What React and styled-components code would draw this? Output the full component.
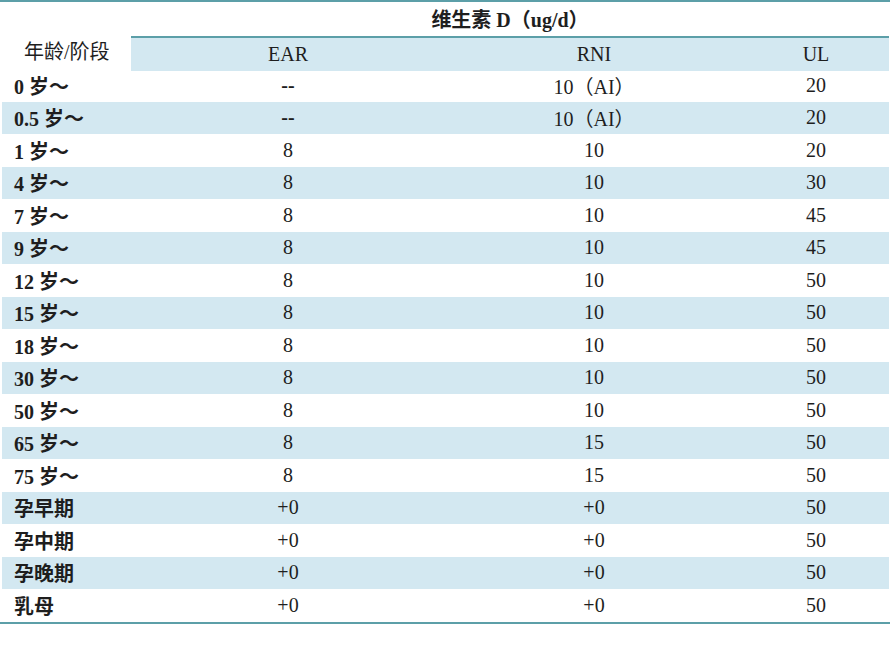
import React from 'react'
import styled, { createGlobalStyle } from 'styled-components'

const Global = createGlobalStyle`
    body {
        margin: 0;
        background: #fff;
    }
`

const Table = styled.div`
    width: 890px;
    border-top: 2px solid #5c9fa8;
    border-bottom: 2px solid #5c9fa8;
    font-family: "Liberation Serif", "Noto Sans CJK SC", serif;
    font-size: 20px;
    color: #1e1e1e;
`

const Grid = styled.div`
    display: grid;
    grid-template-columns: 129px 314px 298px 146px;
    margin: 0 1px 0 2px;
`

const TitleRow = styled(Grid)`
    height: 34px;
    align-items: center;
`

const Title = styled.div`
    grid-column: 2 / 5;
    text-align: center;
    font-weight: 700;
    padding-bottom: 2px;
`

const HeadRow = styled(Grid)`
    height: 33px;
`

const Corner = styled.div`
    display: flex;
    align-items: center;
    padding-left: 22px;
    padding-bottom: 6px;
`

const HeadCells = styled.div`
    grid-column: 2 / 5;
    display: grid;
    grid-template-columns: 314px 298px 146px;
    background: #d3e8f1;
    border-top: 2px solid #5c9fa8;
    align-items: center;
`

const Row = styled(Grid)`
    height: 32.5px;
    align-items: center;
    background: ${p => (p.striped ? '#d3e8f1' : 'transparent')};
`

const Label = styled.div`
    padding-left: 12px;
    font-weight: 700;
`

const Cell = styled.div`
    text-align: center;
    font-weight: ${p => (p.bold ? 700 : 400)};
`

const rows = [
    ['0 岁～', '--', '10（AI）', '20'],
    ['0.5 岁～', '--', '10（AI）', '20'],
    ['1 岁～', '8', '10', '20'],
    ['4 岁～', '8', '10', '30'],
    ['7 岁～', '8', '10', '45'],
    ['9 岁～', '8', '10', '45'],
    ['12 岁～', '8', '10', '50'],
    ['15 岁～', '8', '10', '50'],
    ['18 岁～', '8', '10', '50'],
    ['30 岁～', '8', '10', '50'],
    ['50 岁～', '8', '10', '50'],
    ['65 岁～', '8', '15', '50'],
    ['75 岁～', '8', '15', '50'],
    ['孕早期', '+0', '+0', '50'],
    ['孕中期', '+0', '+0', '50'],
    ['孕晚期', '+0', '+0', '50'],
    ['乳母', '+0', '+0', '50'],
]

const App = () => {
    return (
        <>
            <Global />
            <Table>
                <TitleRow>
                    <Title>维生素 D（ug/d）</Title>
                </TitleRow>
                <HeadRow>
                    <Corner>年龄/阶段</Corner>
                    <HeadCells>
                        <Cell>EAR</Cell>
                        <Cell>RNI</Cell>
                        <Cell>UL</Cell>
                    </HeadCells>
                </HeadRow>
                {rows.map((r, i) => (
                    <Row key={r[0]} striped={i % 2 === 1}>
                        <Label>{r[0]}</Label>
                        <Cell bold={r[1] === '--'}>{r[1]}</Cell>
                        <Cell>{r[2]}</Cell>
                        <Cell>{r[3]}</Cell>
                    </Row>
                ))}
            </Table>
        </>
    )
}

export default App
